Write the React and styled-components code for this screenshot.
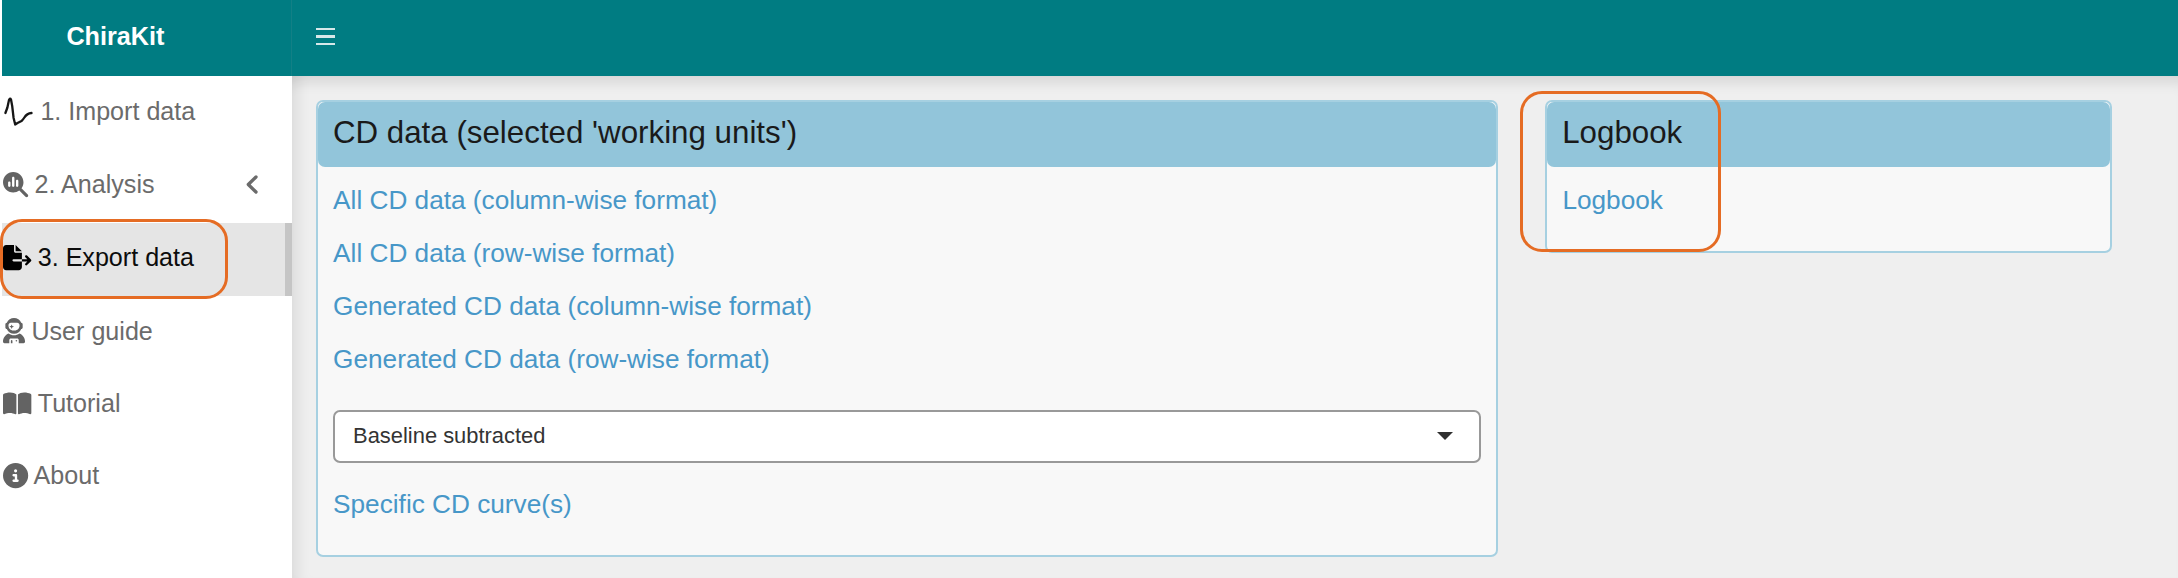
import React from "react";
import styled, { createGlobalStyle } from "styled-components";
import {
  FaMagnifyingGlassChart,
  FaFileExport,
  FaUserAstronaut,
  FaBookOpen,
  FaCircleInfo,
} from "react-icons/fa6";

const GlobalStyle = createGlobalStyle`
  *, *::before, *::after { box-sizing: border-box; }
  body {
    margin: 0;
    overflow: hidden;
    background: #fff;
    font-family: "Liberation Sans", Arial, sans-serif;
    font-size: 26.2px;
  }
`;

const Page = styled.div`
  position: relative;
  display: flex;
  flex-direction: column;
  height: 578px;
  padding-left: 2px;
  overflow: hidden;
`;

const Header = styled.header`
  display: flex;
  flex: 0 0 76.4px;
  background: #007c82;
`;

const Brand = styled.div`
  flex: 0 0 290px;
  padding-left: 64.4px;
  border-right: 1px solid #128086;
  color: #fff;
  font-size: 25.2px;
  font-weight: 700;
  line-height: 72px;
`;

const MenuButton = styled.button`
  display: flex;
  flex-direction: column;
  gap: 5px;
  margin: 28px 0 0 24px;
  padding: 0;
  width: 19px;
  height: 17px;
  border: 0;
  background: none;
`;

const MenuLine = styled.span`
  flex: 0 0 2.4px;
  background: #d6e8e9;
`;

const Body = styled.div`
  display: flex;
  flex: 1;
  min-height: 0;
`;

const Sidebar = styled.nav`
  flex: 0 0 290.3px;
  background: #fff;
`;

const NavItem = styled.a`
  display: flex;
  align-items: center;
  height: ${(p) => p.$height || 73.2}px;
  padding-bottom: 3px;
  gap: ${(p) => p.$gap || 6.4}px;
  border-right: 7px solid ${(p) => (p.$active ? "#c5c5c5" : "transparent")};
  background: ${(p) => (p.$active ? "#e5e5e5" : "transparent")};
  color: ${(p) => (p.$active ? "#0c0c0c" : "#6b6b6b")};
  font-size: 25.1px;
  white-space: nowrap;
`;

const NavIcon = styled.span`
  display: flex;
  flex: 0 0 ${(p) => p.$width}px;
  margin-left: 1px;
  color: ${(p) => (p.$active ? "#000" : "#636363")};

  > svg {
    width: 100%;
    height: ${(p) => p.$height || 25.2}px;
    overflow: visible;
  }
`;

const Chevron = styled.svg`
  margin-left: auto;
  margin-right: 27px;
`;

const Content = styled.main`
  display: flex;
  flex: 1;
  align-items: flex-start;
  gap: 46.5px;
  padding: 23.5px 0 0 23.3px;
  background: #efefef;
  box-shadow: inset 0 16px 14px -10px rgba(0, 0, 0, 0.11),
    inset 16px 0 14px -10px rgba(0, 0, 0, 0.08);
`;

const Card = styled.section`
  flex: 0 0 ${(p) => p.$width}px;
  height: ${(p) => p.$height}px;
  border: 2px solid #a6d0e1;
  border-radius: 7px;
  background: #f8f8f8;
`;

const CardTitle = styled.h2`
  height: 65.5px;
  margin: 0;
  padding-left: 15.3px;
  border-radius: 7px;
  background: #92c5da;
  color: #1a1a1a;
  font-size: 31.3px;
  font-weight: 400;
  line-height: 62.5px;
`;

const CardBody = styled.div`
  display: flex;
  flex-direction: column;
  padding: 7px 15px 0;
`;

const DownloadLink = styled.a`
  height: 53px;
  padding-left: 0.5px;
  color: #4797c8;
  line-height: 53px;
  white-space: nowrap;
`;

const Select = styled.div`
  display: flex;
  align-items: center;
  justify-content: space-between;
  height: 53px;
  margin: 24px 0 15px;
  padding: 0 26px 1px 18.5px;
  border: 2px solid #999;
  border-radius: 7px;
  background: #fff;
  color: #333;
  font-size: 21.9px;
`;

const Caret = styled.span`
  border: solid transparent;
  border-width: 8px 8px 0;
  border-top-color: #303030;
`;

const Highlight = styled.div`
  position: absolute;
  left: ${(p) => p.$x}px;
  top: ${(p) => p.$y}px;
  width: ${(p) => p.$w}px;
  height: ${(p) => p.$h}px;
  border: 3px solid #e56c24;
  border-radius: 22px;
  pointer-events: none;
`;

const SpectrumIcon = () => (
  <svg viewBox="0 0 31 32" fill="none" stroke="#161616" strokeWidth="2.3" strokeLinecap="round" strokeLinejoin="round">
    <path d="M2.4 18 L4.4 12.5 L6 5 Q7 2.6 8 4.5 L9.2 11 L10.6 23 L12.2 29.5 L14.5 28 L18.5 26 C22 23.5 21.5 18.5 28.5 18" />
  </svg>
);

const links = [
  "All CD data (column-wise format)",
  "All CD data (row-wise format)",
  "Generated CD data (column-wise format)",
  "Generated CD data (row-wise format)",
];

export default function App() {
  return (
    <>
      <GlobalStyle />
      <Page>
        <Header>
          <Brand>ChiraKit</Brand>
          <MenuButton aria-label="Toggle sidebar">
            <MenuLine />
            <MenuLine />
            <MenuLine />
          </MenuButton>
        </Header>
        <Body>
          <Sidebar>
            <NavItem>
              <NavIcon $width={31} $height={32}>
                <SpectrumIcon />
              </NavIcon>
              <span>1. Import data</span>
            </NavItem>
            <NavItem>
              <NavIcon $width={25.2}>
                <FaMagnifyingGlassChart />
              </NavIcon>
              <span>2. Analysis</span>
              <Chevron width="12" height="19" viewBox="0 0 12 19" fill="none" stroke="currentColor" strokeWidth="3.3" strokeLinecap="round" strokeLinejoin="round">
                <path d="M10 2 L2.3 9.5 L10 17" />
              </Chevron>
            </NavItem>
            <NavItem $active>
              <NavIcon $active $width={28.35}>
                <FaFileExport />
              </NavIcon>
              <span>3. Export data</span>
            </NavItem>
            <NavItem>
              <NavIcon $width={22.05}>
                <FaUserAstronaut />
              </NavIcon>
              <span>User guide</span>
            </NavItem>
            <NavItem $height={71.6}>
              <NavIcon $width={28.35}>
                <FaBookOpen />
              </NavIcon>
              <span>Tutorial</span>
            </NavItem>
            <NavItem $gap={5.4}>
              <NavIcon $width={25.2}>
                <FaCircleInfo />
              </NavIcon>
              <span>About</span>
            </NavItem>
          </Sidebar>
          <Content>
            <Card $width={1182.8} $height={457.3}>
              <CardTitle>CD data (selected 'working units')</CardTitle>
              <CardBody>
                {links.map((label) => (
                  <DownloadLink key={label}>{label}</DownloadLink>
                ))}
                <Select>
                  <span>Baseline subtracted</span>
                  <Caret />
                </Select>
                <DownloadLink>Specific CD curve(s)</DownloadLink>
              </CardBody>
            </Card>
            <Card $width={567.5} $height={152.7}>
              <CardTitle>Logbook</CardTitle>
              <CardBody>
                <DownloadLink>Logbook</DownloadLink>
              </CardBody>
            </Card>
          </Content>
        </Body>
        <Highlight $x={0} $y={219} $w={228} $h={80} />
        <Highlight $x={1520} $y={91} $w={201} $h={161} />
      </Page>
    </>
  );
}
